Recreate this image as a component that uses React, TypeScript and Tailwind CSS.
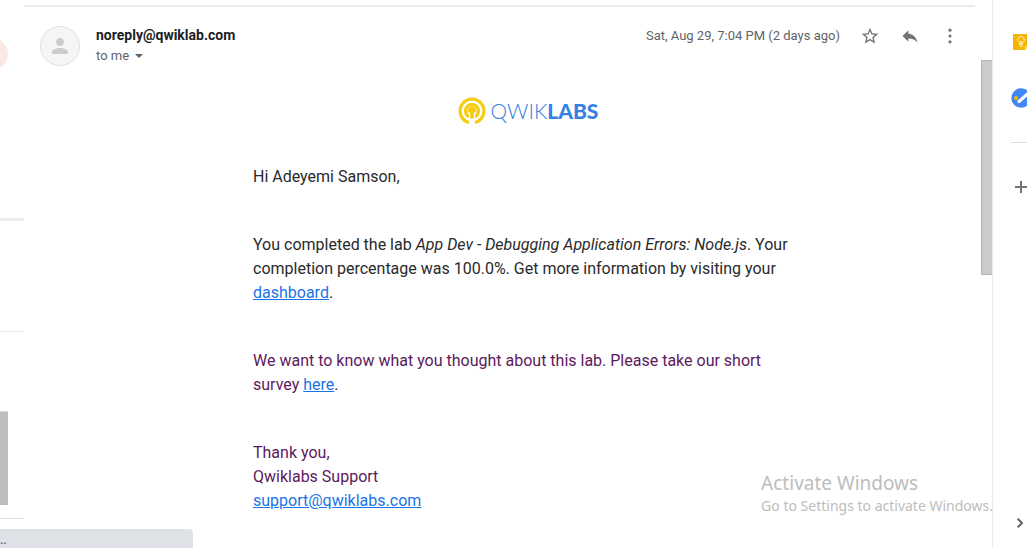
import React from "react";

function TopRule() {
  return <div className="mr-1.5 h-0.5 shrink-0 bg-[#ececec]" />;
}

function LeftPane() {
  return (
    <aside className="flex w-6 shrink-0 flex-col overflow-hidden">
      <div className="mt-[38px] h-8 w-2 overflow-hidden">
        <div className="-ml-6 size-8 rounded-full bg-[#fce8e6]" />
      </div>
      <div className="mt-[148px] h-[3px] bg-[#eceff1]" />
      <div className="mt-[110px] h-px bg-[#ebebeb]" />
      <div className="mt-[79px] h-[94px] w-2 border-t border-[#d9d9d9] bg-[#bdbdbd]" />
      <div className="mt-[13px] h-px bg-[#e0e0e0]" />
    </aside>
  );
}

function MessageHeader() {
  return (
    <header className="flex items-start pl-4 pr-[21px] pt-[19px] text-[#5f6368]">
      <div className="flex size-10 shrink-0 items-center justify-center rounded-full border border-[#e0e0e0] bg-[#f5f5f5]">
        <svg viewBox="0 0 24 24" className="size-6" fill="#cccccc" aria-hidden="true">
          <path d="M12 12c2.200 0 4-1.800 4-4s-1.800-4-4-4-4 1.800-4 4 1.800 4 4 4zm0 2c-2.700 0-8 1.300-8 4v2h16v-2c0-2.700-5.300-4-8-4z" />
        </svg>
      </div>
      <div className="ml-4 flex-1">
        <h3 className="text-sm leading-[18px] font-bold text-[#202124]">noreply@qwiklab.com</h3>
        <button type="button" className="mt-[3px] flex items-center text-[13px] leading-[18px]">
          to me
          <svg viewBox="0 0 8 4" className="ml-1.5 h-1 w-2" fill="#5f6368" aria-hidden="true">
            <path d="M0 0h8L4 4z" />
          </svg>
        </button>
      </div>
      <time className="pt-0.5 text-[13px] leading-4">Sat, Aug 29, 7:04 PM (2 days ago)</time>
      <div className="ml-5 flex gap-5">
        <button type="button" aria-label="Star">
          <svg viewBox="0 0 24 24" className="size-5" fill="#737373">
            <path d="M22 9.240l-7.190-.62L12 2 9.190 8.630 2 9.240l5.460 4.730L5.820 21 12 17.270 18.180 21l-1.630-7.030L22 9.240zM12 15.400l-3.760 2.270 1-4.280-3.320-2.880 4.380-.38L12 6.100l1.710 4.040 4.380.38-3.320 2.880 1 4.280L12 15.400z" />
          </svg>
        </button>
        <button type="button" aria-label="Reply">
          <svg viewBox="0 0 24 24" className="size-5" fill="#737373">
            <path d="M10 9V5l-7 7 7 7v-4.100c5 0 8.500 1.600 11 5.100-1-5-4-10-11-11z" />
          </svg>
        </button>
        <button type="button" aria-label="More">
          <svg viewBox="0 0 24 24" className="size-5" fill="#737373">
            <circle cx="12" cy="5" r="1.900" />
            <circle cx="12" cy="12" r="1.900" />
            <circle cx="12" cy="19" r="1.900" />
          </svg>
        </button>
      </div>
    </header>
  );
}

function Logo() {
  return (
    <div className="flex items-center justify-center gap-[5px]">
      <svg viewBox="0 0 28 28" className="size-7" aria-hidden="true">
        <path d="M11 25.500A11.900 11.900 0 1 1 17 25.500" fill="none" stroke="#f4cd13" strokeWidth="3.200" />
        <path d="M10.800 19.700A6.500 6.500 0 1 1 17.200 19.700" fill="none" stroke="#f4cd13" strokeWidth="3.400" />
        <path d="M12.200 17.300A4.200 4.200 0 1 1 15.800 17.300V21.500h-3.600z" fill="#f4cd13" />
        <path d="M11.500 15v8M16.500 15v8" stroke="#fff" strokeWidth=".9" />
      </svg>
      <span className="font-['Lato'] text-[21px] leading-[26px] font-light text-[#3681e2]">
        QWIK<b className="font-black">LABS</b>
      </span>
    </div>
  );
}

function Link({ href, children }: { href: string; children: React.ReactNode }) {
  return (
    <a href={href} className="text-[#1a73e8] underline">
      {children}
    </a>
  );
}

function MessageBody() {
  return (
    <div className="mt-[31px] pr-[21px] pl-[72px]">
      <div className="mx-auto max-w-[550px] text-base leading-6 text-[#2a2a2a]">
        <Logo />
        <div className="mt-10 flex flex-col gap-11">
          <p>Hi Adeyemi Samson,</p>
          <p>
            You completed the lab <i>App Dev - Debugging Application Errors: Node.js</i>. Your completion
            percentage was 100.0%. Get more information by visiting your <Link href="#dashboard">dashboard</Link>.
          </p>
          <p className="text-[#5c1a5c]">
            We want to know what you thought about this lab. Please take our short survey{" "}
            <Link href="#survey">here</Link>.
          </p>
          <p className="text-[#5c1a5c]">
            Thank you,
            <br />
            Qwiklabs Support
            <br />
            <Link href="mailto:support@qwiklabs.com">support@qwiklabs.com</Link>
          </p>
        </div>
      </div>
    </div>
  );
}

function SideRail() {
  return (
    <nav className="flex w-[35px] shrink-0 flex-col overflow-hidden border-l border-[#ebebeb]">
      <div className="flex w-14 flex-1 flex-col items-center">
        <button type="button" aria-label="Keep" className="mt-[34px]">
          <svg viewBox="0 0 16 16" className="size-4">
            <path d="M1 0h14q1 0 1 1v11l-4 4H1q-1 0-1-1V1q0-1 1-1z" fill="#f4b400" />
            <path d="M12 16v-4h4z" fill="#ffe08a" />
            <path d="M6.400 10.300V8.700a3.300 3.300 0 1 1 3.200 0v1.600zM6.400 12h3.200M7 7l1 1 1-1M8 8v2" fill="none" stroke="#fff3cf" strokeWidth="1" />
          </svg>
        </button>
        <button type="button" aria-label="Tasks" className="mt-[38px]">
          <svg viewBox="0 0 20 20" className="size-5">
            <circle cx="10" cy="10" r="9.700" fill="#4285f4" />
            <path d="M8 13.500L16.500 6" stroke="#fff" strokeWidth="3.200" strokeLinecap="round" />
            <circle cx="5" cy="10" r="2" fill="#f9bb05" />
          </svg>
        </button>
        <div className="mt-[34px] h-px w-5 bg-[#dadce0]" />
        <button type="button" aria-label="Get add-ons" className="mt-[38px]">
          <svg viewBox="0 0 12 12" className="size-3" stroke="#737373" strokeWidth="2">
            <path d="M0 6h12M6 0v12" />
          </svg>
        </button>
        <button type="button" aria-label="Hide side panel" className="mt-auto mb-5 mr-0.5">
          <svg viewBox="0 0 6 10" className="h-2.5 w-1.5" fill="none" stroke="#5f6368" strokeWidth="2">
            <path d="M.7.700L5 5 .7 9.300" />
          </svg>
        </button>
      </div>
    </nav>
  );
}

export default function App() {
  return (
    <div className="relative flex h-screen overflow-hidden bg-white font-['Roboto',sans-serif]">
      <LeftPane />
      <main className="min-w-0 flex-1 pt-[5px]">
        <TopRule />
        <MessageHeader />
        <MessageBody />
      </main>
      <div className="w-[11px] shrink-0 pt-[60px]">
        <div className="h-[215px] border border-r-0 border-[#b3b3b3] bg-[#cbcbcb]" />
      </div>
      <SideRail />
      <div className="absolute bottom-0 left-0 h-[19px] w-[193px] rounded-tr bg-[#dee1e6] font-['Open_Sans',sans-serif] text-xs leading-[22px] text-[#2a4f7d]">
        ..
      </div>
      <div className="pointer-events-none absolute right-[34px] bottom-8 font-['Noto_Sans',sans-serif] text-[#bdbdbd]">
        <div className="text-[19px] leading-[26px]">Activate Windows</div>
        <div className="text-sm leading-5">Go to Settings to activate Windows.</div>
      </div>
    </div>
  );
}
